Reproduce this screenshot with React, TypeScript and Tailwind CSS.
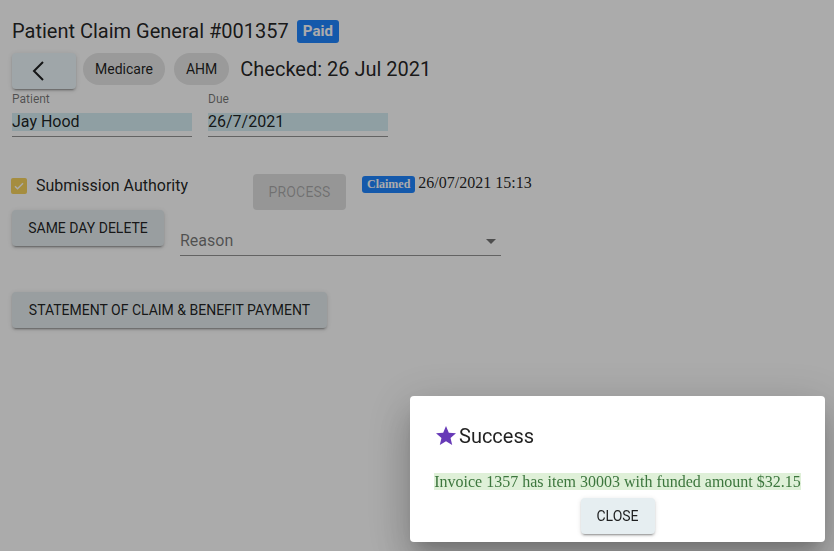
import React from 'react';

const btnShadow =
  'shadow-[0_3px_1px_-2px_rgba(0,0,0,0.2),0_2px_2px_0_rgba(0,0,0,0.14),0_1px_5px_0_rgba(0,0,0,0.12)]';

function Field({ label, value }: { label: string; value: string }) {
  return (
    <div className="w-[180px]">
      <div className="text-[12px] leading-[12px] text-black/[0.54]">{label}</div>
      <div className="mt-[8px] border-b border-black/[0.42] pb-[5px]">
        <div className="h-[18px] bg-[#d5edf3] text-[16px] leading-[18px] text-black/[0.87]">{value}</div>
      </div>
    </div>
  );
}

export default function App() {
  return (
    <div className="relative min-h-[551px] bg-white font-['Roboto',sans-serif] text-black/[0.87]">
      <div className="px-3 pt-4">
        {/* title */}
        <div className="flex h-[30px] items-center gap-2">
          <h1 className="text-[20px] leading-[30px] font-normal">Patient Claim General #001357</h1>
          <span className="rounded-[3px] bg-[#1f85ff] px-[6px] text-[15px] leading-[23px] font-bold text-white">
            Paid
          </span>
        </div>

        {/* back, chips, checked */}
        <div className="mt-[7px] flex items-start">
          <button className={`flex h-9 w-16 items-center justify-center rounded bg-[#eef8fc] ${btnShadow}`}>
            <svg width="36" height="36" viewBox="0 0 36 36" fill="none" stroke="currentColor" strokeWidth="2">
              <polyline points="17,9 8,18 17,27" />
            </svg>
          </button>
          <span className="ml-[7px] flex h-8 items-center rounded-full bg-[#e6e6e6] px-3 text-[14px]">Medicare</span>
          <span className="ml-[9px] flex h-8 items-center rounded-full bg-[#e6e6e6] px-3 text-[14px]">AHM</span>
          <span className="ml-[11px] text-[20px] leading-[33px]">Checked: 26 Jul 2021</span>
        </div>

        {/* patient / due */}
        <div className="mt-[4px] flex gap-4">
          <Field label="Patient" value="Jay Hood" />
          <Field label="Due" value="26/7/2021" />
        </div>

        {/* submission authority row */}
        <div className="mt-[37px] flex items-start">
          <label className="mt-[4px] flex w-[241px] items-center">
            <span className="-ml-px flex h-4 w-4 items-center justify-center rounded-[2px] bg-[#f6d35e]">
              <svg width="12" height="12" viewBox="0 0 24 24" fill="none" stroke="white" strokeWidth="3">
                <path d="M4 12.5l5 5L20 6.5" />
              </svg>
            </span>
            <span className="ml-[9px] text-[16px] leading-[16px]">Submission Authority</span>
          </label>
          <button
            disabled
            className="h-9 w-[93px] rounded bg-black/[0.12] text-[14px] font-normal tracking-[0.2px] text-black/[0.26] uppercase"
          >
            Process
          </button>
          <span className="mt-[2px] ml-4 rounded-[3px] bg-[#1f85ff] px-[5px] font-['Liberation_Serif',serif] text-[12px] leading-[17px] font-bold text-white">
            Claimed
          </span>
          <span className="ml-[3px] font-['Liberation_Serif',serif] text-[16px] leading-[18px]">26/07/2021 15:13</span>
        </div>

        {/* same day delete */}
        <div className="flex items-start">
          <button className={`h-9 w-[152px] rounded bg-[#e4ecef] text-[14px] font-normal uppercase ${btnShadow}`}>
            Same Day Delete
          </button>
          <div className="ml-4 w-[321px] border-b border-black/[0.42] pt-[21px] pb-[5px]">
            <div className="flex h-[19px] items-center justify-between">
              <span className="text-[16px] text-black/[0.54]">Reason</span>
              <svg width="24" height="24" viewBox="0 0 24 24" fill="currentColor" className="-mr-[2px] text-black/[0.54]">
                <path d="M7 10l5 5 5-5z" />
              </svg>
            </div>
          </div>
        </div>

        <button className={`mt-[36px] h-9 w-[315px] rounded bg-[#e4ecef] text-[14px] font-normal uppercase ${btnShadow}`}>
          Statement of Claim &amp; Benefit Payment
        </button>
      </div>

      {/* backdrop */}
      <div className="fixed inset-0 bg-black/[0.33]" />

      {/* dialog */}
      <div className="fixed top-[396px] left-[410px] flex h-[146px] w-[415px] flex-col items-center rounded bg-white px-6 pt-6 shadow-[0_11px_15px_-7px_rgba(0,0,0,0.2),0_24px_38px_3px_rgba(0,0,0,0.14),0_9px_46px_8px_rgba(0,0,0,0.12)]">
        <div className="flex h-8 w-full items-center">
          <svg width="24" height="24" viewBox="0 0 24 24" fill="#673ab7">
            <path d="M12 17.27L18.18 21l-1.64-7.03L22 9.24l-7.19-.61L12 2 9.19 8.63 2 9.24l5.46 4.73L5.82 21z" />
          </svg>
          <span className="ml-px text-[20px] text-black/[0.87]">Success</span>
        </div>
        <p className="mt-[21px] text-center font-['Liberation_Serif',serif] text-[16px] leading-[17px]">
          <span className="bg-[#dff0d8] text-[#3c763d]">Invoice 1357 has item 30003 with funded amount $32.15</span>
        </p>
        <button
          className={`mt-2 h-9 w-[74px] rounded bg-[#e6eef1] text-[14px] font-normal text-black/[0.87] uppercase ${btnShadow}`}
        >
          Close
        </button>
      </div>
    </div>
  );
}
